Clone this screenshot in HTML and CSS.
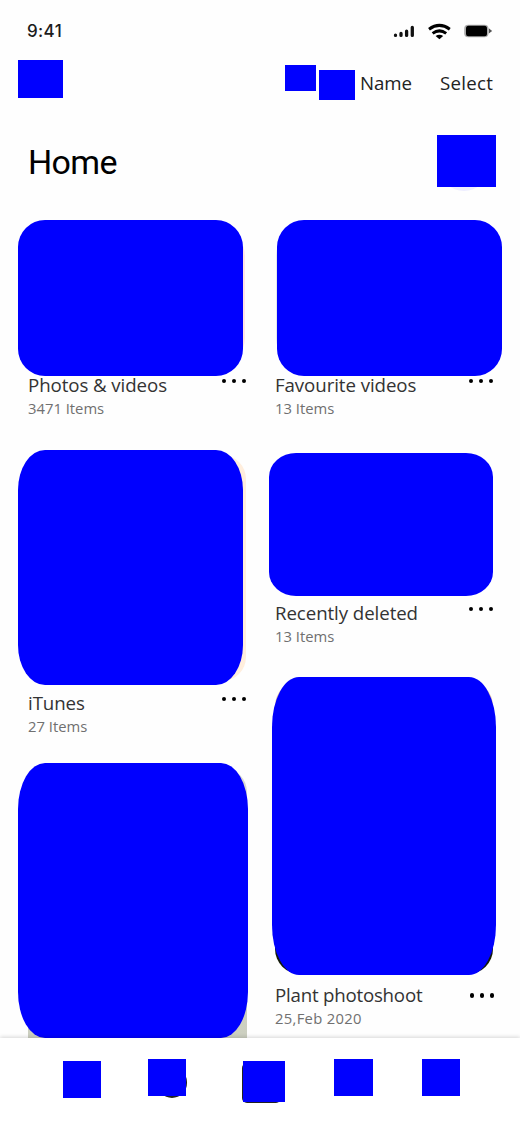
FILE: index.html
```html
<!DOCTYPE html>
<html lang="en">
<head>
<meta charset="utf-8">
<title>Home</title>
<link rel="stylesheet" href="styles.css">
</head>
<body>
<div class="screen">
  <header class="status">
    <span class="time">9:41</span>
    <svg class="status-icons" width="100" height="20" viewBox="0 0 100 20">
      <g stroke="#111" stroke-width="3.3" stroke-linecap="round">
        <path d="M4.5 14.2v.2M10 12.4v2M15.6 10.2v4.2M21.3 6.4v8"/>
      </g>
      <g fill="none" stroke="#000" stroke-width="3">
        <path d="M38 8.2q10.4-7.6 20.8 0"/>
        <path d="M41.6 12.4q6.8-5 13.6 0"/>
      </g>
      <path d="M44.6 14.9q3.8-2.5 7.6 0L48.4 18.2z"/>
      <rect x="73.2" y="3.8" width="24.3" height="12.4" rx="4" fill="#aaa"/>
      <rect x="75" y="4.8" width="21" height="10.4" rx="2.5"/>
      <path d="M97.8 7.3l3.4 2.7-3.4 2.6z" fill="#555"/>
    </svg>
  </header>
  <div class="toolbar">
    <span class="block back"></span>
    <span class="block sort"></span>
    <span class="block view"></span>
    <span class="tool name">Name</span>
    <span class="tool select">Select</span>
  </div>
  <div class="heading">
    <h1>Home</h1>
    <span class="block add"></span>
  </div>
  <main class="columns">
    <section class="column">
      <article class="card photos">
        <div class="thumb"></div>
        <div class="caption"><div><h2>Photos &amp; videos</h2><p>3471 Items</p></div><div class="dots"><i></i><i></i><i></i></div></div>
      </article>
      <article class="card itunes">
        <div class="thumb"></div>
        <div class="caption"><div><h2>iTunes</h2><p>27 Items</p></div><div class="dots"><i></i><i></i><i></i></div></div>
      </article>
      <article class="card album">
        <div class="thumb"></div>
      </article>
    </section>
    <section class="column">
      <article class="card favourite">
        <div class="thumb"></div>
        <div class="caption"><div><h2>Favourite videos</h2><p>13 Items</p></div><div class="dots"><i></i><i></i><i></i></div></div>
      </article>
      <article class="card deleted">
        <div class="thumb"></div>
        <div class="caption"><div><h2>Recently deleted</h2><p>13 Items</p></div><div class="dots"><i></i><i></i><i></i></div></div>
      </article>
      <article class="card plant">
        <div class="thumb"></div>
        <div class="caption"><div><h2>Plant photoshoot</h2><p>25,Feb 2020</p></div><div class="dots"><i></i><i></i><i></i></div></div>
      </article>
    </section>
  </main>
  <nav class="tabs">
    <span class="block tab home"></span>
    <span class="block tab search"></span>
    <span class="block tab create"></span>
    <span class="block tab files"></span>
    <span class="block tab profile"></span>
  </nav>
</div>
</body>
</html>
```
FILE: styles.css
```css
* { box-sizing: border-box; }
body { margin: 0; background: #fefefe; font-family: "Open Sans", "Noto Sans", sans-serif; }
h1, h2, p { margin: 0; font-weight: 400; white-space: nowrap; }
.screen { width: 520px; height: 1125px; overflow: hidden; display: flex; flex-direction: column; }
.block { display: block; flex: none; background: #00f; }

.status { height: 60px; padding: 21px 26px 0 27px; display: flex; justify-content: space-between; align-items: flex-start; }
.time { font: 500 17px/21px Inter, sans-serif; color: #1c1c1c; letter-spacing: .35px; }
.status-icons { width: 100px; height: 20px; overflow: visible; margin-right: 3px; }

.toolbar { height: 75px; padding-left: 18px; display: flex; align-items: flex-start; }
.back { width: 45px; height: 38px; }
.sort { width: 31px; height: 26px; margin: 5px 0 0 222px; }
.view { width: 36px; height: 30px; margin: 10px 0 0 3px; }
.tool { font-size: 18.7px; line-height: 24px; margin-top: 11px; color: #222; white-space: nowrap; }
.name { width: 79px; margin-left: 5px; letter-spacing: -.1px; }
.select { letter-spacing: .25px; margin-left: 1px; }

.heading { height: 85px; padding: 0 24px 0 28px; display: flex; justify-content: space-between; align-items: flex-start; }
h1 { font: 400 34px/40px Roboto, sans-serif; letter-spacing: -.65px; margin-top: 7px; color: #000; }
.add { width: 59px; height: 52px; position: relative; }
.add::before { content: ""; position: absolute; z-index: -1; left: 3px; top: 8px; width: 48px; height: 48px; border-radius: 50%; background: #eeeeff; }

.columns { height: 818px; flex: none; padding: 0 24px 0 28px; display: grid; grid-template-columns: 219px 219px; column-gap: 28px; }
.thumb { position: relative; background: #00f; }
.thumb::before { content: ""; position: absolute; z-index: -1; }
.caption { display: flex; justify-content: space-between; height: 42px; }
h2 { font-size: 18.7px; line-height: 20px; letter-spacing: -.08px; color: #333; }
p { font-size: 14.8px; line-height: 18px; margin-top: 4px; color: #707070; }
.dots { display: flex; gap: 5.5px; margin: 3.5px 1px 0 0; height: 4.5px; }
.dots i { width: 4.5px; height: 4.5px; border-radius: 50%; background: #000; }

.photos .thumb { margin-left: -10px; width: 225px; height: 156px; border-radius: 27px; }
.photos .thumb::before { right: -2px; top: 10px; bottom: 12px; width: 60px; border-radius: 26px; background: #ffe4e4; }
.photos { height: 230px; }
.photos .caption, .favourite .caption { margin-top: -.6px; }
.favourite .thumb { margin-left: 2px; width: 225px; height: 156px; border-radius: 27px; }
.favourite .thumb::before { left: -1px; top: 10px; bottom: 12px; width: 60px; border-radius: 26px; background: #e4e8ee; }
.favourite { height: 233px; }
.itunes .thumb { margin-left: -10px; width: 225px; height: 235px; border-radius: 27px / 40px; }
.itunes .thumb::before { right: -3px; top: 5px; bottom: 4px; width: 100px; border-radius: 24px; background: #ffeedd; }
.itunes { height: 313px; }
.itunes .caption { margin-top: 8px; }
.deleted .thumb { margin-left: -6px; width: 224px; height: 143px; border-radius: 27px / 24px; }
.deleted { height: 224px; }
.deleted .caption { margin-top: 7px; }
.album .thumb { margin-left: -10px; width: 230px; height: 275px; border-radius: 27px / 46px; }
.album .thumb::before { left: 10px; right: 1px; top: 5px; bottom: 0; border-radius: 24px 24px 0 0; background: linear-gradient(#d9dbd2, #cccfc0); }
.plant .thumb { margin-left: -3px; width: 224px; height: 298px; border-radius: 27px / 50px; }
.plant .thumb::before { left: 3px; right: 3px; top: 4px; bottom: 1px; border-radius: 25px; background: linear-gradient(#dfbea8 30%, #141b0a 70%); }
.plant .caption { margin-top: 10.4px; }
.plant h2 { letter-spacing: -.22px; }
.plant p { letter-spacing: .3px; }
.plant .dots { margin: 8px 0 0 0; }

.tabs { height: 87px; flex: none; background: #fff; position: relative; z-index: 0; display: flex; align-items: flex-start; padding: 21px 0 0 63px; box-shadow: 0 -1px 4px rgba(0,0,0,.16); }
.tab { width: 38px; height: 37px; }
.home, .create { margin-top: 2px; }
.search { margin-left: 47px; position: relative; }
.search::before { content: ""; position: absolute; z-index: -1; left: 9px; top: 8px; width: 30.4px; height: 30.4px; border: 3px solid #222; border-radius: 50%; }
.tab.search::before { left: 8.7px; top: 8.2px; }
.search::before, .create::before { box-sizing: border-box; }
.create { width: 42px; height: 41px; margin-left: 57px; position: relative; }
.create::before { content: ""; position: absolute; z-index: -1; left: -1px; right: 4px; top: 2px; bottom: -1px; border-radius: 5px; background: #222; }
.files { width: 39px; margin-left: 49px; }
.profile { margin-left: 49px; }
```
